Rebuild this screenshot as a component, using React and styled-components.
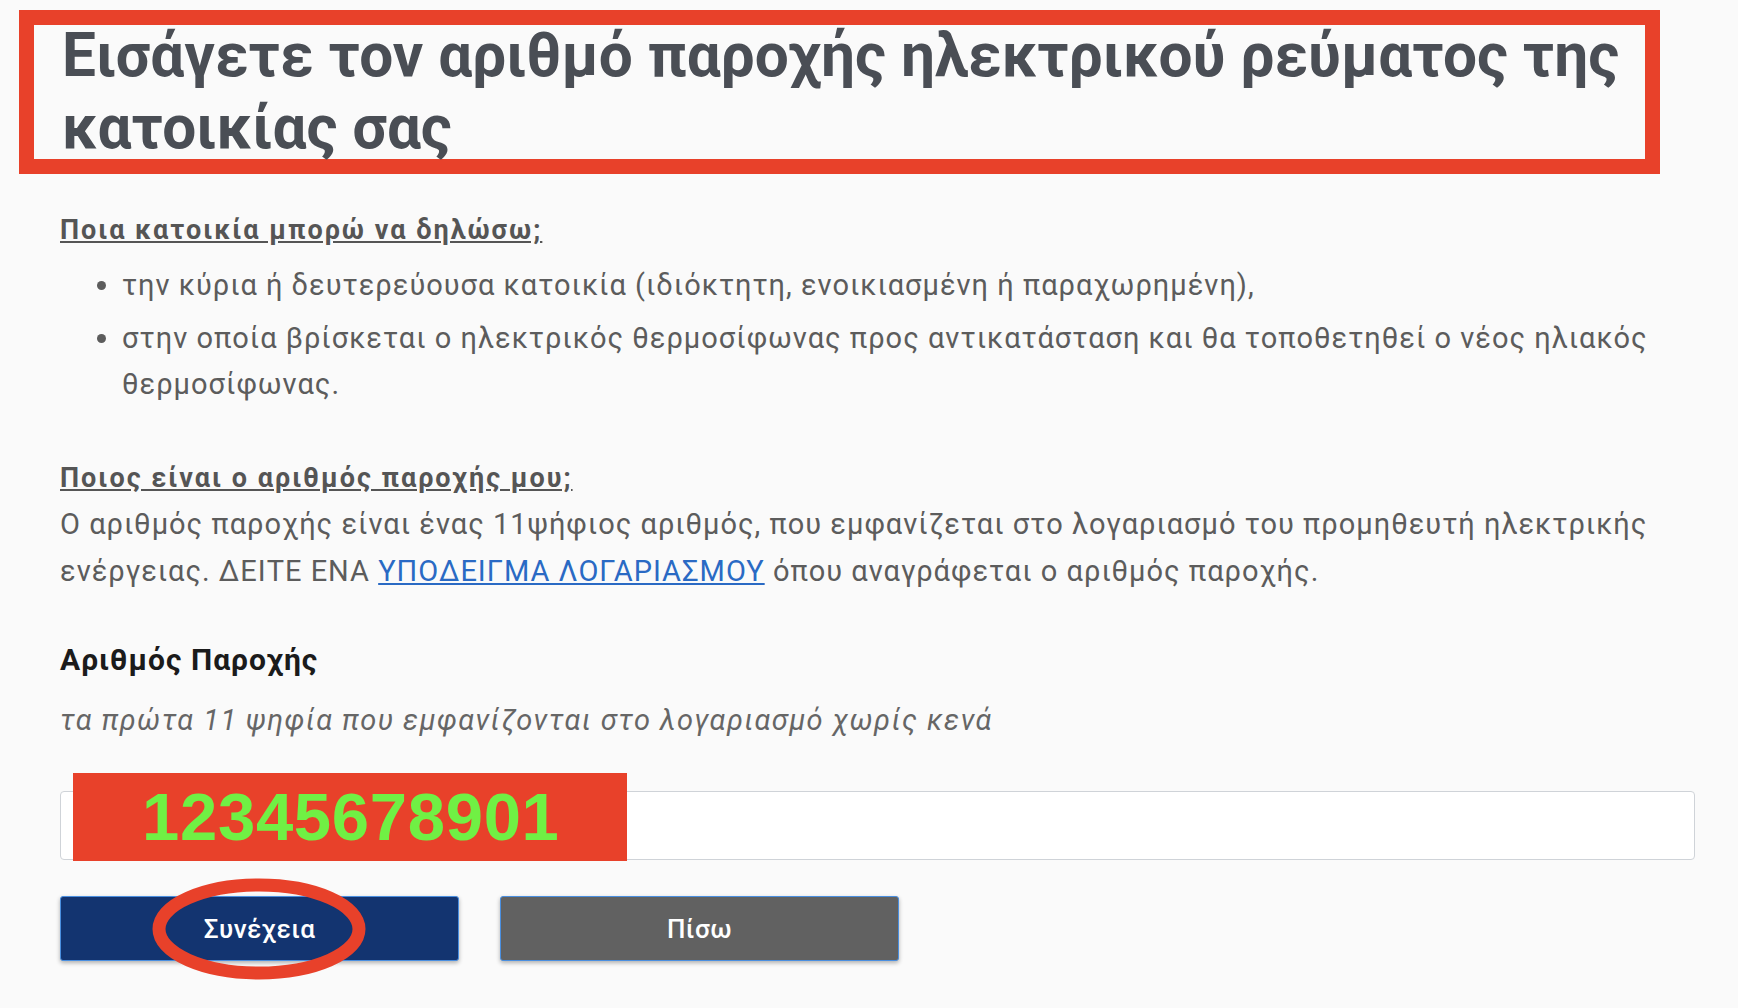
import { createGlobalStyle, styled } from "styled-components"

const GlobalStyle = createGlobalStyle`
    html, body {
        margin: 0;
        padding: 0;
        background: #fafafa;
    }
    body {
        font-family: Roboto, "Noto Sans", "Liberation Sans", sans-serif;
    }
`

export default function App() {
    return (
        <>
            <GlobalStyle />
            <Page>
                <TitleBox>
                    <Title>Εισάγετε τον αριθμό παροχής ηλεκτρικού ρεύματος της κατοικίας σας</Title>
                </TitleBox>

                <Question>Ποια κατοικία μπορώ να δηλώσω;</Question>
                <List>
                    <Item>την κύρια ή δευτερεύουσα κατοικία (ιδιόκτητη, ενοικιασμένη ή παραχωρημένη),</Item>
                    <Item>στην οποία βρίσκεται ο ηλεκτρικός θερμοσίφωνας προς αντικατάσταση και θα τοποθετηθεί ο νέος ηλιακός θερμοσίφωνας.</Item>
                </List>

                <Question $gap={48}>Ποιος είναι ο αριθμός παροχής μου;</Question>
                <Text>
                    Ο αριθμός παροχής είναι ένας 11ψήφιος αριθμός, που εμφανίζεται στο λογαριασμό του προμηθευτή ηλεκτρικής
                    ενέργειας. ΔΕΙΤΕ ΕΝΑ <Link href="#">ΥΠΟΔΕΙΓΜΑ ΛΟΓΑΡΙΑΣΜΟΥ</Link> όπου αναγράφεται ο αριθμός παροχής.
                </Text>

                <Label>Αριθμός Παροχής</Label>
                <Hint>τα πρώτα 11 ψηφία που εμφανίζονται στο λογαριασμό χωρίς κενά</Hint>

                <InputWrap>
                    <Input type="text" />
                    <NumberTag>12345678901</NumberTag>
                </InputWrap>

                <Buttons>
                    <ButtonWrap>
                        <Button $bg="#133470">Συνέχεια</Button>
                        <Circle viewBox="0 0 230 110">
                            <ellipse cx="115" cy="55" rx="100" ry="44" fill="none" stroke="#e8412a" strokeWidth="13" />
                        </Circle>
                    </ButtonWrap>
                    <ButtonWrap>
                        <Button $bg="#616161">Πίσω</Button>
                    </ButtonWrap>
                </Buttons>
            </Page>
        </>
    )
}

const Page = styled.div`
    padding: 10px 44px 40px 60px;
`

const TitleBox = styled.div`
    margin-left: -41px;
    width: 1583px;
    height: 134px;
    border: 15px solid #e8412a;
    padding-left: 28px;
`

const Title = styled.h1`
    margin: -5px 0 0;
    font-size: 60.3px;
    line-height: 72px;
    font-weight: 700;
    color: #4a4e55;
`

const Question = styled.div`
    margin-top: ${p => p.$gap || 33}px;
    font-size: 27px;
    line-height: 46px;
    font-weight: 700;
    color: #555;
    text-decoration: underline;
    letter-spacing: 2px;
`

const List = styled.ul`
    margin: 9px 0 0;
    padding-left: 62px;
`

const Item = styled.li`
    font-size: 29px;
    line-height: 46px;
    color: #5c5c5c;
    margin-bottom: 7px;
    letter-spacing: 1px;
`

const Text = styled.p`
    margin: 0;
    font-size: 29px;
    line-height: 47px;
    color: #5c5c5c;
    letter-spacing: 1px;
`

const Link = styled.a`
    color: #2a6ac4;
    text-decoration: underline;
`

const Label = styled.div`
    margin-top: 42px;
    font-size: 30px;
    line-height: 46px;
    font-weight: 700;
    color: #1b1b1b;
    letter-spacing: 1px;
`

const Hint = styled.div`
    margin-top: 14px;
    font-size: 29px;
    line-height: 46px;
    font-style: italic;
    color: #666;
    letter-spacing: 1.4px;
`

const InputWrap = styled.div`
    position: relative;
    margin-top: 48px;
`

const Input = styled.input`
    display: block;
    box-sizing: border-box;
    width: 1635px;
    height: 69px;
    background: #fff;
    border: 1px solid #cfd3d8;
    border-radius: 4px;
    outline: none;
`

const NumberTag = styled.div`
    position: absolute;
    left: 13px;
    top: -18px;
    width: 554px;
    height: 88px;
    background: #e8412a;
    color: #70f044;
    font-family: "Liberation Sans", Arial, sans-serif;
    font-weight: 700;
    font-size: 67px;
    line-height: 88px;
    padding-left: 69px;
    box-sizing: border-box;
    letter-spacing: 0.7px;
`

const Buttons = styled.div`
    display: flex;
    gap: 41px;
    margin-top: 36px;
`

const ButtonWrap = styled.div`
    position: relative;
`

const Button = styled.button`
    width: 399px;
    height: 65px;
    background: ${p => p.$bg};
    color: #fff;
    border: 1px solid #4a8fe0;
    border-radius: 3px;
    box-shadow: 0 2px 4px rgba(0, 0, 0, 0.3);
    font-family: Roboto, sans-serif;
    font-size: 26px;
    font-weight: 500;
    letter-spacing: 0.5px;
    cursor: pointer;
`

const Circle = styled.svg`
    position: absolute;
    left: 84px;
    top: -22px;
    width: 230px;
    height: 110px;
    pointer-events: none;
`
